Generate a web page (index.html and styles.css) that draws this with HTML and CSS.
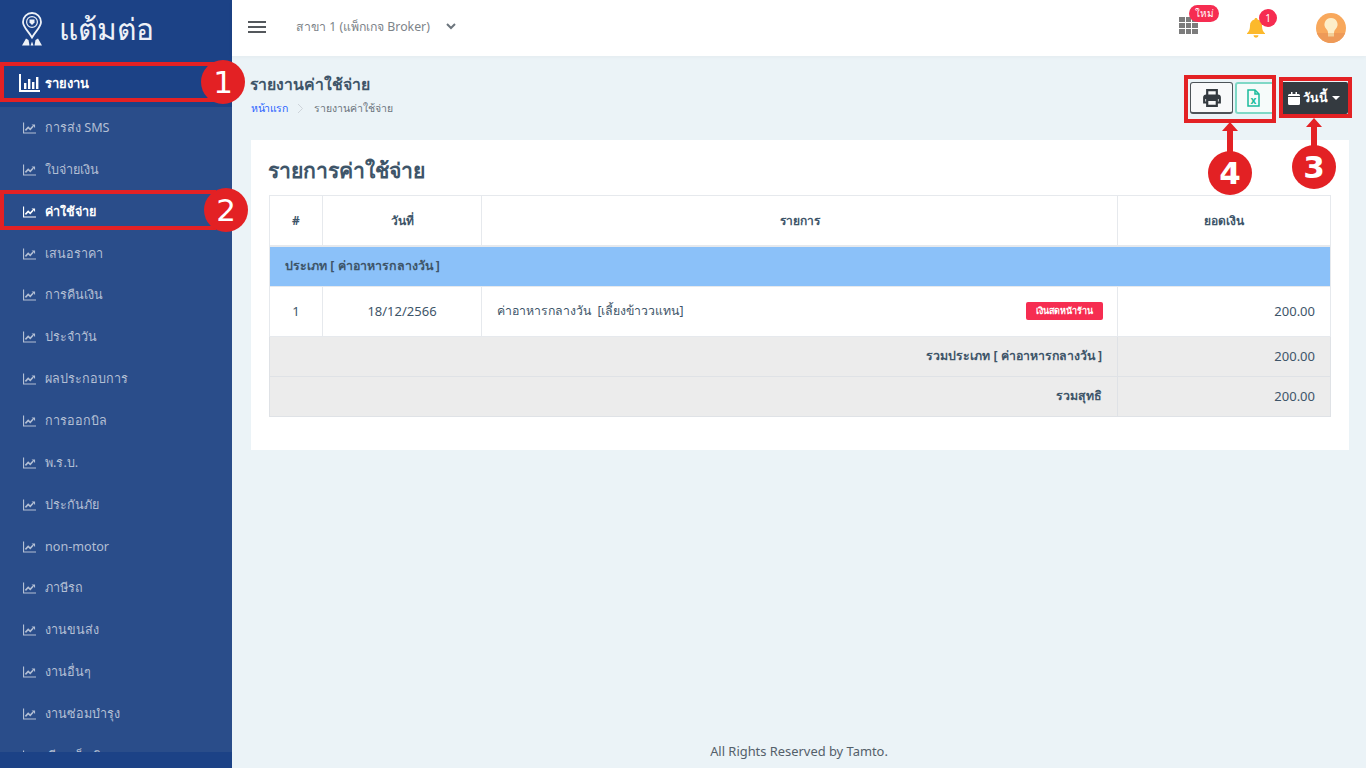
FILE: index.html
```html
<!DOCTYPE html>
<html lang="en">
<head>
  <meta charset="UTF-8" />
  <title>รายงานค่าใช้จ่าย</title>
  <link rel="stylesheet" href="styles.css">
</head>
<body>
  <svg width="0" height="0" class="defs">
    <symbol id="ico-line" viewBox="0 0 14 12">
      <path d="M.6 0v11.400H14" fill="none" stroke="currentColor" stroke-width="1.200"/>
      <path d="M2.600 8.600 5.600 5.400l2.200 2 3-3.300" fill="none" stroke="currentColor" stroke-width="1.700"/>
      <path d="M9.200 2.200h3.800v3.800z" fill="currentColor"/>
    </symbol>
  </svg>

  <!-- SIDEBAR -->
  <aside class="sidebar">
    <div class="brand">
      <svg class="brand-pin" width="20" height="34" viewBox="0 0 20 34">
        <path d="M10 1a9 9 0 0 0-9 9c0 5.200 5.400 9 9 15.500 3.600-6.500 9-10.300 9-15.500a9 9 0 0 0-9-9z" fill="none" stroke="#eef2f8" stroke-width="1.800"/>
        <circle cx="10" cy="10" r="5.400" fill="none" stroke="#eef2f8" stroke-width="1.200"/>
        <path d="M7.500 7.500h5v3l-2.500 2.500-2.500-2.500z" fill="#eef2f8"/>
        <path d="M0 33.500l4-7 2.500 1.500 1 5.500zM20 33.500l-4-7-2.500 1.500-1 5.500zM8.500 33.500l1.500-4 1.500 4z" fill="#eef2f8"/>
      </svg>
      <span class="brand-name">แต้มต่อ</span>
    </div>
    <nav class="menu">
      <a class="menu-head">
        <svg width="21" height="18" viewBox="0 0 21 18"><path d="M1 0v17h20" fill="none" stroke="#fff" stroke-width="2"/><path d="M5 9h2.400v6H5zM9 5h2.400v10H9zM13 8h2.400v7H13zM17 3h2.400v12H17z" fill="#fff"/></svg>
        รายงาน
      </a>
      <a class="menu-item"><svg class="ico"><use href="#ico-line"/></svg>การส่ง SMS</a>
      <a class="menu-item"><svg class="ico"><use href="#ico-line"/></svg>ใบจ่ายเงิน</a>
      <a class="menu-item active"><svg class="ico"><use href="#ico-line"/></svg>ค่าใช้จ่าย</a>
      <a class="menu-item"><svg class="ico"><use href="#ico-line"/></svg>เสนอราคา</a>
      <a class="menu-item"><svg class="ico"><use href="#ico-line"/></svg>การคืนเงิน</a>
      <a class="menu-item"><svg class="ico"><use href="#ico-line"/></svg>ประจำวัน</a>
      <a class="menu-item"><svg class="ico"><use href="#ico-line"/></svg>ผลประกอบการ</a>
      <a class="menu-item"><svg class="ico"><use href="#ico-line"/></svg>การออกบิล</a>
      <a class="menu-item"><svg class="ico"><use href="#ico-line"/></svg>พ.ร.บ.</a>
      <a class="menu-item"><svg class="ico"><use href="#ico-line"/></svg>ประกันภัย</a>
      <a class="menu-item"><svg class="ico"><use href="#ico-line"/></svg>non-motor</a>
      <a class="menu-item"><svg class="ico"><use href="#ico-line"/></svg>ภาษีรถ</a>
      <a class="menu-item"><svg class="ico"><use href="#ico-line"/></svg>งานขนส่ง</a>
      <a class="menu-item"><svg class="ico"><use href="#ico-line"/></svg>งานอื่นๆ</a>
      <a class="menu-item"><svg class="ico"><use href="#ico-line"/></svg>งานซ่อมบำรุง</a>
      <a class="menu-item"><svg class="ico"><use href="#ico-line"/></svg>เรียกเก็บเงิน</a>
    </nav>
    <div class="sidebar-foot"></div>
  </aside>

  <div class="content">
    <!-- TOP BAR -->
    <header class="topbar">
      <div class="burger"><i></i><i></i><i></i></div>
      <div class="branch">สาขา 1 (แพ็กเกจ Broker)</div>
      <svg class="chev" width="10" height="7" viewBox="0 0 10 7"><path d="M1 1l4 4 4-4" fill="none" stroke="#6c757d" stroke-width="2"/></svg>
      <div class="top-icons">
        <div class="top-ico apps">
          <div class="grid-dots"><i></i><i></i><i></i><i></i><i></i><i></i><i></i><i></i><i></i></div>
          <span class="pill">ใหม่</span>
        </div>
        <div class="top-ico bell">
          <svg width="18" height="20" viewBox="0 0 18 20"><path d="M9 0c-1 0-1.500.7-1.500 1.600C4.700 2.300 3 4.600 3 7.500c0 4.500-1.200 6-3 7.800V16h18v-.7c-1.800-1.800-3-3.300-3-7.800 0-2.900-1.700-5.200-4.500-5.900C10.500.7 10 0 9 0z" fill="#fcb92c"/><path d="M6.500 17.200h5a2.500 2.500 0 0 1-5 0z" fill="#fcb92c"/></svg>
          <span class="count">1</span>
        </div>
        <div class="avatar">
          <svg width="30" height="30" viewBox="0 0 30 30"><circle cx="15" cy="15" r="15" fill="#f8a85c"/><path d="M.8 20h28.400a15 15 0 0 1-28.400 0z" fill="#ee9a58"/><path d="M15 5a6.500 6.500 0 0 0-4.500 11.200c1 1 1.500 2.300 1.500 3.800h6c0-1.500.5-2.800 1.500-3.800A6.500 6.500 0 0 0 15 5z" fill="#fdeec9"/><path d="M12 20h6v3.500h-6z" fill="#f3cf98"/></svg>
        </div>
      </div>
    </header>

    <main class="main">
      <!-- PAGE HEADER -->
      <div class="page-head">
        <div>
          <h1 class="page-title">รายงานค่าใช้จ่าย</h1>
          <div class="crumbs">
            <a>หน้าแรก</a>
            <svg width="7" height="11" viewBox="0 0 7 11"><path d="M1 1l4.500 4.500L1 10" fill="none" stroke="#ced4da"/></svg>
            <span>รายงานค่าใช้จ่าย</span>
          </div>
        </div>
        <div class="tools">
          <button class="btn-print">
            <svg width="18" height="18" viewBox="0 0 18 18"><path d="M4.200 6.500V1.200h9.600v5.300" fill="none" stroke="#343a40" stroke-width="2.200"/><path d="M4.200 13.500H1.200V8.500a2 2 0 0 1 2-2h11.600a2 2 0 0 1 2 2v5h-3" fill="none" stroke="#343a40" stroke-width="2.200"/><path d="M1.500 7h15v3h-15z" fill="#343a40"/><path d="M4.200 11h9.600v5.800H4.200z" fill="none" stroke="#343a40" stroke-width="2.200"/></svg>
          </button>
          <button class="btn-excel">
            <svg width="13" height="18" viewBox="0 0 13 18"><path d="M1 1h7l4 4v12H1z" fill="none" stroke="#1abc9c" stroke-width="1.500"/><path d="M8 1v4h4" fill="none" stroke="#1abc9c" stroke-width="1.500"/><text x="6.500" y="14.500" class="x-mark">x</text></svg>
          </button>
          <button class="btn-date">
            <svg width="12" height="13" viewBox="0 0 12 13"><path d="M0 5h12v6.500A1.500 1.500 0 0 1 10.500 13h-9A1.500 1.500 0 0 1 0 11.500zM1.500 2H3V0h1.500v2h3V0H9v2h1.500A1.500 1.500 0 0 1 12 3.500V4H0v-.5A1.500 1.500 0 0 1 1.500 2z" fill="#fff"/></svg>
            วันนี้
            <span class="caret"></span>
          </button>
        </div>
      </div>

      <!-- CARD -->
      <section class="card">
        <h2 class="card-title">รายการค่าใช้จ่าย</h2>
        <table class="report">
          <colgroup>
            <col class="c-no"><col class="c-date"><col><col class="c-amt">
          </colgroup>
          <thead>
            <tr><th>#</th><th>วันที่</th><th>รายการ</th><th>ยอดเงิน</th></tr>
          </thead>
          <tbody>
            <tr class="group"><td colspan="4">ประเภท [ ค่าอาหารกลางวัน ]</td></tr>
            <tr class="line">
              <td class="center">1</td>
              <td class="center">18/12/2566</td>
              <td>
                <div class="desc">
                  <span class="desc-text">ค่าอาหารกลางวัน&nbsp; [เลี้ยงข้าววแทน]</span>
                  <span class="tag">เงินสดหน้าร้าน</span>
                </div>
              </td>
              <td class="right">200.00</td>
            </tr>
            <tr class="sum">
              <td colspan="3" class="right label">รวมประเภท [ ค่าอาหารกลางวัน ]</td>
              <td class="right">200.00</td>
            </tr>
            <tr class="sum">
              <td colspan="3" class="right label">รวมสุทธิ</td>
              <td class="right">200.00</td>
            </tr>
          </tbody>
        </table>
      </section>
    </main>

    <footer class="footer">All Rights Reserved by Tamto.</footer>
  </div>

  <!-- RED TUTORIAL MARKS OVER THE SCREENSHOT -->
  <div class="mark box box-1"></div>
  <div class="mark box box-2"></div>
  <div class="mark box box-3"></div>
  <div class="mark box box-4"></div>
  <div class="mark dot dot-1">1</div>
  <div class="mark dot dot-2">2</div>
  <div class="mark dot dot-3">3</div>
  <div class="mark dot dot-4">4</div>
  <svg class="mark arrow arrow-3" width="16" height="36" viewBox="0 0 16 36"><path d="M8 0l8 9h-5v27H5V9H0z" fill="#e32124"/></svg>
  <svg class="mark arrow arrow-4" width="16" height="36" viewBox="0 0 16 36"><path d="M8 0l8 9h-5v27H5V9H0z" fill="#e32124"/></svg>
</body>
</html>
```

FILE: styles.css
```css
* {
  box-sizing: border-box;
}

body {
  margin: 0;
  height: 768px;
  overflow: hidden;
  display: flex;
  background-color: #ebf3f7;
  color: #3e5569;
  font-family: "Noto Sans", "Open Sans", sans-serif;
  font-size: 14px;
}

.defs {
  position: absolute;
}

/* SIDEBAR */
.sidebar {
  width: 232px;
  height: 768px;
  flex: none;
  display: flex;
  flex-direction: column;
  background-color: #2a4d8a;
}

.brand {
  height: 62px;
  flex: none;
  display: flex;
  align-items: center;
  gap: 17px;
  padding-left: 22px;
  background-color: #1c4286;
}

.brand-pin {
  margin-top: -5px;
}

.brand-name {
  color: #eef2f8;
  font-size: 30px;
  line-height: 1;
  margin-top: -4px;
}

.menu {
  flex: 1;
  min-height: 0;
  overflow: hidden;
}

.menu-head {
  height: 45px;
  display: flex;
  align-items: center;
  gap: 5px;
  padding-left: 19px;
  padding-bottom: 3px;
  background-color: #1c4286;
  color: #fff;
  font-size: 13px;
  font-weight: 700;
}

.menu-item {
  height: 41.860px;
  display: flex;
  align-items: center;
  gap: 9px;
  padding-left: 23px;
  color: #b3bfd4;
  font-size: 12.600px;
}

.menu-item.active {
  color: #fff;
  font-weight: 700;
}

.ico {
  width: 13px;
  height: 12px;
  flex: none;
}

.sidebar-foot {
  height: 16px;
  flex: none;
  background-color: #1c4286;
}

/* TOP BAR */
.content {
  flex: 1;
  min-width: 0;
  display: flex;
  flex-direction: column;
}

.topbar {
  height: 56px;
  flex: none;
  display: flex;
  align-items: center;
  padding-left: 16px;
  background-color: #fff;
  box-shadow: 0 1px 4px rgba(0, 0, 0, 0.04);
}

.burger {
  width: 18px;
  display: flex;
  flex-direction: column;
  gap: 3px;
  margin: -2px 30px 0 0;
}

.burger i {
  height: 2px;
  background-color: #54585c;
}

.branch {
  color: #7d8489;
  font-size: 12.300px;
  margin: -3px 16px 0 0;
}

.chev {
  margin-top: -3px;
}

.top-icons {
  margin-left: auto;
  display: flex;
  align-items: center;
  padding-right: 20px;
}

.top-ico {
  position: relative;
}

.apps {
  margin: -5px 49px 0 0;
}

.grid-dots {
  width: 19px;
  display: grid;
  grid-template-columns: repeat(3, 5.500px);
  gap: 1px;
}

.grid-dots i {
  height: 4.700px;
  background-color: #7c7c7c;
}

.pill {
  position: absolute;
  top: -12px;
  left: 10px;
  width: 30px;
  height: 17px;
  border-radius: 9px;
  background-color: #f62d51;
  color: #fff;
  font-size: 10px;
  line-height: 17px;
  text-align: center;
}

.bell {
  height: 20px;
  margin: -1px 51px 0 0;
}

.count {
  position: absolute;
  top: -9px;
  left: 12px;
  width: 18px;
  height: 18px;
  border-radius: 50%;
  background-color: #f62d51;
  color: #fff;
  font-size: 10px;
  line-height: 18px;
  text-align: center;
}

.avatar {
  width: 30px;
  height: 30px;
}

/* PAGE HEADER */
.main {
  flex: 1;
  padding: 0 17px 0 19px;
}

.page-head {
  height: 84px;
  display: flex;
  justify-content: space-between;
  padding-top: 17px;
}

.page-title {
  margin: 0 0 0 -1px;
  font-size: 15.800px;
  line-height: 22px;
  font-weight: 700;
  color: #3e5569;
}

.crumbs {
  display: flex;
  align-items: center;
  gap: 10px;
  margin-top: 4px;
  font-size: 10.500px;
  line-height: 18px;
  color: #6c757d;
}

.crumbs a {
  color: #2962ff;
  letter-spacing: -0.500px;
}

.tools {
  display: flex;
  align-items: flex-start;
  padding-top: 9px;
  padding-right: 1px;
}

.tools button {
  height: 32px;
  padding: 0;
  display: flex;
  align-items: center;
  justify-content: center;
  font-family: inherit;
}

.btn-print {
  width: 43px;
  background-color: #f8f9fa;
  border: 1px solid #4d5358;
  border-bottom-width: 2px;
  border-radius: 3px;
  margin-right: 2px;
}

.btn-excel {
  width: 41px;
  background-color: #f6fbfa;
  border: 2px solid #7fd8c6;
  border-radius: 3px;
  padding-right: 4px !important;
  margin-right: 4px;
}

.x-mark {
  font-size: 10px;
  font-weight: 700;
  fill: #1abc9c;
  text-anchor: middle;
}

.btn-date {
  width: 68px;
  gap: 3px;
  background-color: #343a40;
  border: 0;
  border-radius: 2px;
  color: #fff;
  font-size: 12.500px;
  font-weight: 700;
}

.caret {
  margin-left: 1px;
  border-top: 4px solid #fff;
  border-left: 4px solid transparent;
  border-right: 4px solid transparent;
}

/* CARD */
.card {
  height: 310px;
  padding: 14px 18px 0;
  background-color: #fff;
}

.card-title {
  margin: 0 0 9px -1px;
  font-size: 21.200px;
  line-height: 32px;
  font-weight: 700;
  color: #3e5569;
}

.report {
  width: 100%;
  table-layout: fixed;
  border-collapse: collapse;
  font-size: 13px;
  color: #3e5569;
}

.c-no {
  width: 53px;
}

.c-date {
  width: 159px;
}

.c-amt {
  width: 213px;
}

.report th,
.report td {
  border: 1px solid #e6e9ed;
  padding: 0 15px;
}

.report th {
  height: 50px;
  border-bottom-width: 2px;
  font-size: 12px;
  font-weight: 700;
  text-align: center;
}

.group td {
  height: 41px;
  padding-bottom: 1px;
  background-color: #8bc1f9;
  font-size: 12.400px;
  font-weight: 700;
}

.line td {
  height: 50px;
  padding-bottom: 2px;
}

.desc-text {
  font-size: 12.300px;
}

.sum td {
  height: 40px;
  padding-bottom: 2px;
  background-color: #ececec;
  border-color: #dfe2e6;
}

.report .label {
  font-size: 12.300px;
  font-weight: 700;
}

.center {
  text-align: center;
}

.report .right {
  text-align: right;
}

.desc {
  display: flex;
  align-items: center;
  justify-content: space-between;
}

.tag {
  padding: 0 10px;
  height: 18px;
  line-height: 18px;
  border-radius: 2px;
  background-color: #f62d51;
  color: #fff;
  font-size: 9px;
  font-weight: 700;
  margin-right: -1px;
}

.footer {
  height: 33px;
  flex: none;
  text-align: center;
  font-size: 12.900px;
  line-height: 33px;
  color: #54606a;
}

/* RED MARKS */
.mark {
  position: absolute;
}

.box {
  border: 4px solid #e32124;
}

.box-1 {
  left: 0;
  top: 62px;
  width: 216px;
  height: 40px;
}

.box-2 {
  left: 0;
  top: 190px;
  width: 216px;
  height: 40px;
}

.box-3 {
  left: 1279px;
  top: 77px;
  width: 73px;
  height: 41px;
}

.box-4 {
  left: 1184px;
  top: 75px;
  width: 92px;
  height: 48px;
}

.dot {
  width: 44px;
  height: 44px;
  border-radius: 50%;
  background-color: #e32124;
  color: #fff;
  font-family: "DejaVu Sans", sans-serif;
  font-size: 31px;
  line-height: 44px;
  text-align: center;
}

.dot-1 {
  left: 201px;
  top: 60px;
}

.dot-2 {
  left: 204px;
  top: 188px;
}

.dot-3 {
  left: 1292px;
  top: 145px;
  font-weight: 700;
}

.dot-4 {
  left: 1208px;
  top: 151px;
  font-weight: 700;
}

.arrow-3 {
  left: 1306px;
  top: 118px;
}

.arrow-4 {
  left: 1222px;
  top: 122px;
}
```
